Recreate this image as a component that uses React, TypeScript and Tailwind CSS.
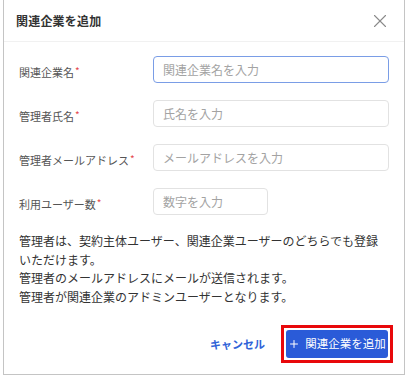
import { Plus, X } from 'lucide-react'

const font = { fontFamily: '"Noto Sans CJK JP", "Noto Sans", sans-serif' }

function Label({ text }: { text: string }) {
  return (
    <label className="text-[11px] text-[#555] leading-none whitespace-nowrap">
      {text}
      <span className="text-[#e5484d] text-[10px] relative -top-[2px] ml-[1px]">*</span>
    </label>
  )
}

export default function App() {
  const fields = [
    { label: '関連企業名', placeholder: '関連企業名を入力', focused: true, wide: true },
    { label: '管理者氏名', placeholder: '氏名を入力', focused: false, wide: true },
    { label: '管理者メールアドレス', placeholder: 'メールアドレスを入力', focused: false, wide: true },
    { label: '利用ユーザー数', placeholder: '数字を入力', focused: false, wide: false },
  ]

  return (
    <div className="w-[407px] h-[377px] bg-white" style={font}>
      <div className="ml-[3px] w-[402px] h-[375px] border-x border-b border-[#c4c4c4] flex flex-col">
        {/* Header */}
        <header className="h-[42px] shrink-0 flex items-center justify-between pl-[12px] pr-[13px] border-b border-[#f1f1f1]">
          <h2 className="text-[12px] font-bold text-[#333] tracking-[0.2px]">関連企業を追加</h2>
          <X className="w-[22px] h-[22px] text-[#8a8a8a]" strokeWidth={1.2} />
        </header>

        {/* Form */}
        <div className="pl-[15px] pr-[15px] pt-[14px] flex flex-col gap-[17px]">
          {fields.map((f) => (
            <div key={f.label} className="flex items-center">
              <div className="w-[134px] shrink-0">
                <Label text={f.label} />
              </div>
              <input
                readOnly
                placeholder={f.placeholder}
                className={
                  'h-[27px] rounded-[4px] border px-[9px] text-[12px] text-[#333] placeholder:text-[#a3a3a3] outline-none ' +
                  (f.wide ? 'w-[236px] ' : 'w-[115px] ') +
                  (f.focused ? 'border-[#7a9de6]' : 'border-[#e2e2e2]')
                }
                style={font}
              />
            </div>
          ))}
        </div>

        {/* Note */}
        <p className="pl-[15px] pr-[20px] mt-[17px] text-[12px] leading-[18.5px] text-[#333]">
          管理者は、契約主体ユーザー、関連企業ユーザーのどちらでも登録いただけます。
          <br />
          管理者のメールアドレスにメールが送信されます。
          <br />
          管理者が関連企業のアドミンユーザーとなります。
        </p>

        {/* Footer */}
        <div className="mt-auto mb-[11px] pr-[11px] flex items-center justify-end gap-[16px]">
          <button className="text-[11px] font-semibold text-[#2f62d8]" style={font}>
            キャンセル
          </button>
          <div className="border-[3px] border-[#e8080b] p-[2px]">
            <button
              className="h-[28px] w-[102px] rounded-[3px] bg-[#2a5bd8] text-white text-[11.5px] flex items-center justify-center gap-[5px]"
              style={font}
            >
              <Plus className="w-[12px] h-[12px]" strokeWidth={2} />
              関連企業を追加
            </button>
          </div>
        </div>
      </div>
    </div>
  )
}
